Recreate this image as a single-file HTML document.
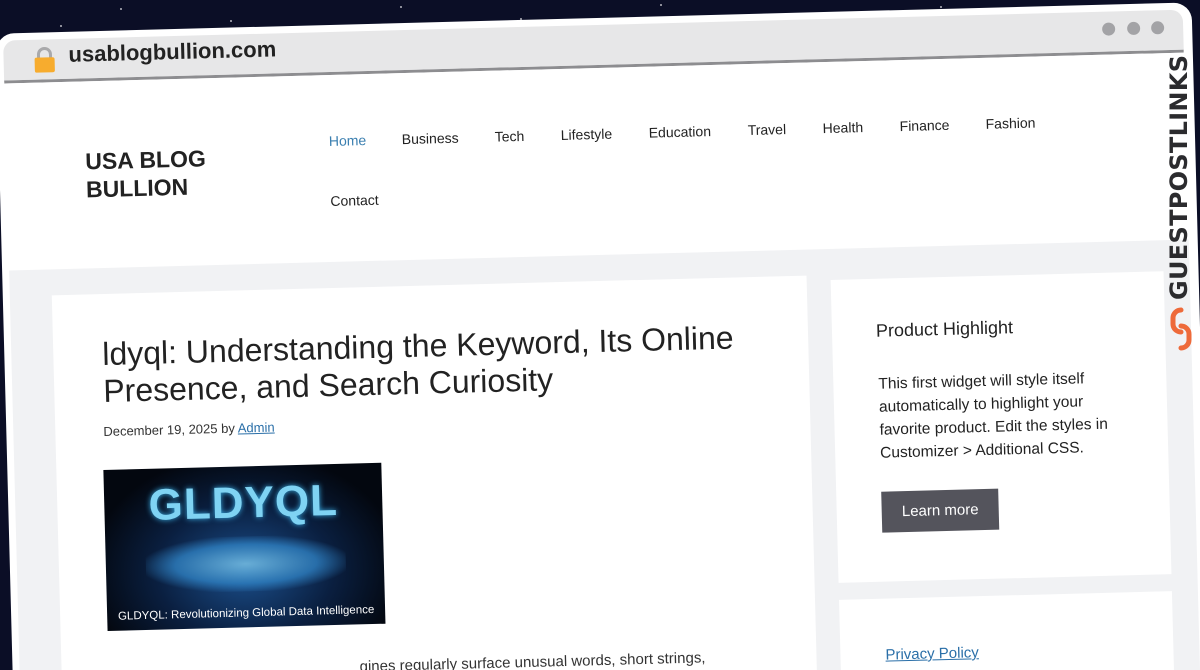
<!DOCTYPE html>
<html><head><meta charset="utf-8"><style>
html,body{margin:0;padding:0;width:1200px;height:670px;overflow:hidden;background:#0b0e26;font-family:"Liberation Sans",sans-serif;}
#wrap{position:relative;width:1200px;height:670px;overflow:hidden;background:#0b0e26}
.star{position:absolute;width:2px;height:2px;background:#fff;border-radius:50%;opacity:.7}
#rot{position:absolute;left:0;top:0;width:1200px;height:670px;transform:rotate(-1.5deg);transform-origin:600px 335px;}
.a{position:absolute;white-space:nowrap}
#frame{position:absolute;left:4px;top:18px;width:1196px;height:720px;background:#fff;border-radius:18px 18px 0 0;}
#bar{position:absolute;left:11px;top:25px;width:1180px;height:40px;background:#e7e7e8;border-radius:12px 12px 0 0;border-bottom:3px solid #8d8d90;}
.dot{position:absolute;width:13px;height:13px;border-radius:50%;background:#a3a3a6;top:36px}
#gray{position:absolute;left:11px;top:255px;width:1180px;height:480px;background:#f1f2f4;}
.card{position:absolute;background:#fff;}
.nav{font-size:14px;color:#222;top:126px}
</style></head><body><div id="wrap">
<div class="star" style="left:120px;top:8px"></div><div class="star" style="left:230px;top:20px"></div><div class="star" style="left:400px;top:6px"></div><div class="star" style="left:520px;top:18px"></div><div class="star" style="left:660px;top:4px"></div><div class="star" style="left:780px;top:14px"></div><div class="star" style="left:940px;top:6px"></div><div class="star" style="left:60px;top:25px"></div>
<div id="rot">
<div id="frame"></div>
<div id="bar"></div>
<svg class="a" style="left:40px;top:31px" width="24" height="28" viewBox="0 0 24 28"><path d="M6 13V9a6 6 0 0 1 12 0v4" fill="none" stroke="#a9a9ab" stroke-width="3"/><rect x="2" y="12" width="20" height="15" rx="2" fill="#f7ac2e"/></svg>
<div class="a" style="left:76px;top:28px;font-size:22px;font-weight:bold;color:#222">usablogbullion.com</div>
<div class="dot" style="left:1110px"></div><div class="dot" style="left:1135px"></div><div class="dot" style="left:1159px"></div>
<div class="a" style="left:90px;top:134px;font-size:23px;font-weight:bold;color:#222;line-height:28px">USA BLOG<br>BULLION</div>
<div class="a nav" style="left:334px;color:#3b7fb0">Home</div>
<div class="a nav" style="left:407px">Business</div>
<div class="a nav" style="left:500px">Tech</div>
<div class="a nav" style="left:566px">Lifestyle</div>
<div class="a nav" style="left:654px">Education</div>
<div class="a nav" style="left:753px">Travel</div>
<div class="a nav" style="left:828px">Health</div>
<div class="a nav" style="left:905px">Finance</div>
<div class="a nav" style="left:991px">Fashion</div>
<div class="a nav" style="left:334px;top:186px">Contact</div>
<div id="gray"></div>
<div class="card" style="left:53px;top:281px;width:755px;height:460px"></div>
<div class="card" style="left:832px;top:286px;width:333px;height:303px"></div>
<div class="card" style="left:832px;top:606px;width:333px;height:140px"></div>
<div class="a" style="left:102px;top:323px;font-size:32px;line-height:37px;color:#222">ldyql: Understanding the Keyword, Its Online<br>Presence, and Search Curiosity</div>
<div class="a" style="left:101px;top:411px;font-size:13px;color:#333">December 19, 2025 by <span style="color:#2a6fa8;text-decoration:underline">Admin</span></div>
<div class="a" style="left:100px;top:457px;width:278px;height:161px;background:radial-gradient(ellipse at 50% 65%,#1b4f8c 0%,#0a1f40 45%,#03070f 80%);overflow:hidden">
<div style="position:absolute;left:0;right:0;top:12px;text-align:center;font-size:44px;font-weight:bold;color:#7fd3f3;letter-spacing:1px;text-shadow:0 0 6px #3ab0e8">GLDYQL</div>
<div style="position:absolute;left:40px;top:70px;width:200px;height:55px;background:radial-gradient(ellipse,#7cc6ea 0%,#2e7fc0 50%,transparent 75%);opacity:.8"></div>
<div style="position:absolute;left:0;right:0;bottom:8px;text-align:center;font-size:11.5px;color:#fff">GLDYQL: Revolutionizing Global Data Intelligence</div>
</div>
<div class="a" style="left:351px;top:652px;font-size:15px;color:#333">gines regularly surface unusual words, short strings,</div>
<div class="a" style="left:876px;top:328px;font-size:18px;color:#222">Product Highlight</div>
<div class="a" style="left:877px;top:380px;font-size:15.5px;line-height:23px;color:#222">This first widget will style itself<br>automatically to highlight your<br>favorite product. Edit the styles in<br>Customizer &gt; Additional CSS.</div>
<div class="a" style="left:877px;top:499px;width:117px;height:41px;background:#54545c;color:#fff;font-size:15px;line-height:41px;text-align:center">Learn more</div>
<div class="a" style="left:877px;top:654px;font-size:15px;color:#2a6fa8;text-decoration:underline">Privacy Policy</div>
</div>
<div class="a" style="left:1165px;top:300px;transform:rotate(-90deg);transform-origin:0 0;font-family:'DejaVu Sans',sans-serif;font-size:24px;font-weight:bold;color:#2b2b2e;letter-spacing:0.3px">GUESTPOSTLINKS</div>
<svg class="a" style="left:1168px;top:306px" width="26" height="46" viewBox="0 0 26 46"><path d="M13 4a8 8 0 0 0-8 8v6a8 8 0 0 0 8 8M13 42a8 8 0 0 0 8-8v-6a8 8 0 0 0-8-8" fill="none" stroke="#ee6a3a" stroke-width="5" stroke-linecap="round"/></svg>
</div></body></html>
